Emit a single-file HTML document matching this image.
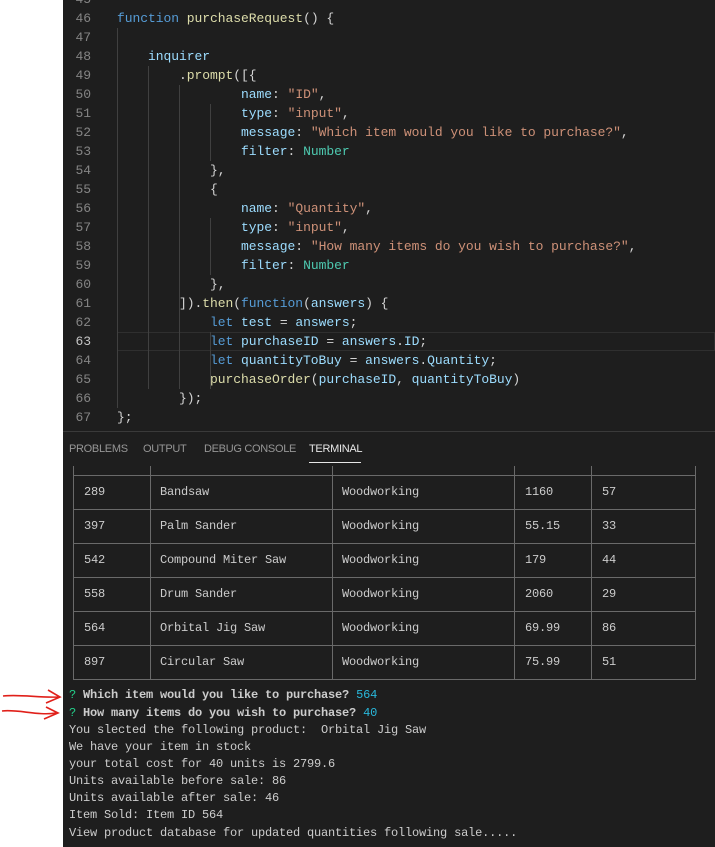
<!DOCTYPE html>
<html><head><meta charset="utf-8"><style>
body{margin:0;width:715px;height:847px;background:#fff;position:relative;overflow:hidden;font-family:"Liberation Mono",monospace;font-size:13px}
#p{position:absolute;left:63px;top:0;width:652px;height:847px;background:#1e1e1e}
.l{position:absolute;left:0;height:19px;line-height:19px;white-space:pre;color:#d4d4d4;letter-spacing:-0.05px}
.n{position:absolute;left:0;width:28px;text-align:right;color:#858585}
.c{position:absolute;left:54px}
.k{color:#569cd6}.f{color:#dcdcaa}.v{color:#9cdcfe}.s{color:#ce9178}.t{color:#4ec9b0}
.g{position:absolute;width:1px;background:#404040}
.tabs{position:absolute;top:443px;font-family:"Liberation Sans",sans-serif;font-size:11px;color:#969696;letter-spacing:-0.3px}
.h{position:absolute;left:10px;width:623px;height:1px;background:#6a6a6a}
.vl{position:absolute;top:466px;height:214px;width:1px;background:#6a6a6a}
.td{position:absolute;color:#cccccc;white-space:pre;line-height:17px;font-size:12px;letter-spacing:-0.2px}
.o{position:absolute;left:6px;white-space:pre;color:#cccccc;line-height:17.1px;font-size:12px;letter-spacing:-0.2px}
</style></head><body>
<div id="p">
<div style="position:absolute;left:54px;right:0;top:332px;height:17px;border:1px solid #2f2f2f"></div>
<div class="g" style="left:54px;top:28px;height:380px"></div>
<div class="g" style="left:85px;top:66px;height:323px"></div>
<div class="g" style="left:116px;top:85px;height:304px"></div>
<div class="g" style="left:147px;top:104px;height:57px"></div>
<div class="g" style="left:147px;top:218px;height:57px"></div>
<div class="g" style="left:147px;top:332px;height:57px"></div>
<div class="l" style="top:-10px"><span class="n">45</span></div>
<div class="l" style="top:9px"><span class="n">46</span><span class="c"><span class="k">function</span> <span class="f">purchaseRequest</span>() {</span></div>
<div class="l" style="top:28px"><span class="n">47</span></div>
<div class="l" style="top:47px"><span class="n">48</span><span class="c">    <span class="v">inquirer</span></span></div>
<div class="l" style="top:66px"><span class="n">49</span><span class="c">        .<span class="f">prompt</span>([{</span></div>
<div class="l" style="top:85px"><span class="n">50</span><span class="c">                <span class="v">name</span>: <span class="s">"ID"</span>,</span></div>
<div class="l" style="top:104px"><span class="n">51</span><span class="c">                <span class="v">type</span>: <span class="s">"input"</span>,</span></div>
<div class="l" style="top:123px"><span class="n">52</span><span class="c">                <span class="v">message</span>: <span class="s">"Which item would you like to purchase?"</span>,</span></div>
<div class="l" style="top:142px"><span class="n">53</span><span class="c">                <span class="v">filter</span>: <span class="t">Number</span></span></div>
<div class="l" style="top:161px"><span class="n">54</span><span class="c">            },</span></div>
<div class="l" style="top:180px"><span class="n">55</span><span class="c">            {</span></div>
<div class="l" style="top:199px"><span class="n">56</span><span class="c">                <span class="v">name</span>: <span class="s">"Quantity"</span>,</span></div>
<div class="l" style="top:218px"><span class="n">57</span><span class="c">                <span class="v">type</span>: <span class="s">"input"</span>,</span></div>
<div class="l" style="top:237px"><span class="n">58</span><span class="c">                <span class="v">message</span>: <span class="s">"How many items do you wish to purchase?"</span>,</span></div>
<div class="l" style="top:256px"><span class="n">59</span><span class="c">                <span class="v">filter</span>: <span class="t">Number</span></span></div>
<div class="l" style="top:275px"><span class="n">60</span><span class="c">            },</span></div>
<div class="l" style="top:294px"><span class="n">61</span><span class="c">        ]).<span class="f">then</span>(<span class="k">function</span>(<span class="v">answers</span>) {</span></div>
<div class="l" style="top:313px"><span class="n">62</span><span class="c">            <span class="k">let</span> <span class="v">test</span> = <span class="v">answers</span>;</span></div>
<div class="l" style="top:332px"><span class="n" style="color:#c6c6c6">63</span><span class="c">            <span class="k">let</span> <span class="v">purchaseID</span> = <span class="v">answers</span>.<span class="v">ID</span>;</span></div>
<div class="l" style="top:351px"><span class="n">64</span><span class="c">            <span class="k">let</span> <span class="v">quantityToBuy</span> = <span class="v">answers</span>.<span class="v">Quantity</span>;</span></div>
<div class="l" style="top:370px"><span class="n">65</span><span class="c">            <span class="f">purchaseOrder</span>(<span class="v">purchaseID</span>, <span class="v">quantityToBuy</span>)</span></div>
<div class="l" style="top:389px"><span class="n">66</span><span class="c">        });</span></div>
<div class="l" style="top:408px"><span class="n">67</span><span class="c">};</span></div>
<div style="position:absolute;left:0;right:0;top:431px;height:1px;background:#3a3a3a"></div>
<div class="tabs" style="left:6px">PROBLEMS</div>
<div class="tabs" style="left:80px">OUTPUT</div>
<div class="tabs" style="left:141px">DEBUG CONSOLE</div>
<div class="tabs" style="left:246px;color:#e7e7e7">TERMINAL</div>
<div style="position:absolute;left:246px;top:462px;width:52px;height:1px;background:#e7e7e7"></div>
<div class="h" style="top:475px"></div><div class="h" style="top:509px"></div><div class="h" style="top:543px"></div><div class="h" style="top:577px"></div><div class="h" style="top:611px"></div><div class="h" style="top:645px"></div><div class="h" style="top:679px"></div>
<div class="vl" style="left:10px"></div><div class="vl" style="left:87px"></div><div class="vl" style="left:269px"></div><div class="vl" style="left:451px"></div><div class="vl" style="left:528px"></div><div class="vl" style="left:632px"></div>
<div class="td" style="left:21px;top:484px">289<br><br>397<br><br>542<br><br>558<br><br>564<br><br>897</div>
<div class="td" style="left:97px;top:484px">Bandsaw<br><br>Palm Sander<br><br>Compound Miter Saw<br><br>Drum Sander<br><br>Orbital Jig Saw<br><br>Circular Saw</div>
<div class="td" style="left:279px;top:484px">Woodworking<br><br>Woodworking<br><br>Woodworking<br><br>Woodworking<br><br>Woodworking<br><br>Woodworking</div>
<div class="td" style="left:462px;top:484px">1160<br><br>55.15<br><br>179<br><br>2060<br><br>69.99<br><br>75.99</div>
<div class="td" style="left:539px;top:484px">57<br><br>33<br><br>44<br><br>29<br><br>86<br><br>51</div>
<div class="o" style="top:687px;font-weight:bold"><span style="color:#23d18b;font-weight:normal">?</span> Which item would you like to purchase? <span style="color:#29b8db;font-weight:normal">564</span></div>
<div class="o" style="top:704.5px;font-weight:bold"><span style="color:#23d18b;font-weight:normal">?</span> How many items do you wish to purchase? <span style="color:#29b8db;font-weight:normal">40</span></div>
<div class="o" style="top:722px">You slected the following product:  Orbital Jig Saw
We have your item in stock
your total cost for 40 units is 2799.6
Units available before sale: 86
Units available after sale: 46
Item Sold: Item ID 564
View product database for updated quantities following sale.....</div>
</div>
<svg style="position:absolute;left:0;top:685px" width="64" height="40">
<path d="M3 11 C20 9 40 13 58 12 M48 5 L60 12 L46 18" stroke="#e0201a" stroke-width="1.6" fill="none"/>
<path d="M2 26 C18 24 38 31 56 28 M46 22 L58 28 L44 34" stroke="#e0201a" stroke-width="1.6" fill="none"/>
</svg>
</body></html>
